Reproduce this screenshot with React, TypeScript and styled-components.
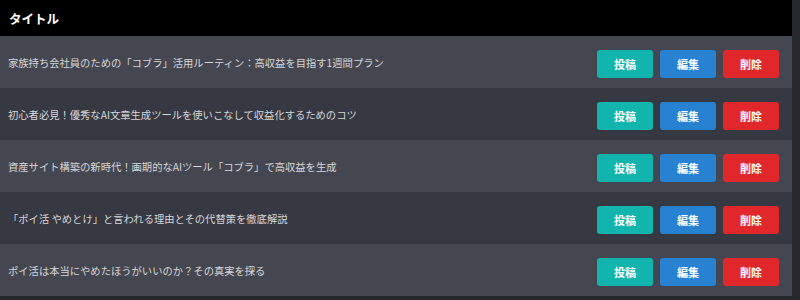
import styled, { createGlobalStyle } from "styled-components";

const GlobalStyle = createGlobalStyle`
  html, body {
    margin: 0;
    padding: 0;
    background: #27282c;
  }
  body {
    font-family: "Noto Sans CJK JP", "Noto Sans", sans-serif;
  }
`;

const Page = styled.div`
  width: 800px;
  height: 300px;
  display: flex;
  background: #27282c;
  overflow: hidden;
`;

const Table = styled.div`
  width: 792px;
  display: flex;
  flex-direction: column;
`;

const Header = styled.div`
  height: 36px;
  background: #000;
  color: #fff;
  font-size: 12.5px;
  font-weight: 700;
  display: flex;
  align-items: center;
  padding-left: 9px;
`;

const Row = styled.div<{ $alt: boolean }>`
  height: 52px;
  background: ${(p) => (p.$alt ? "#373942" : "#454750")};
  display: flex;
  align-items: center;
  justify-content: space-between;
  padding: 0 13px 0 8px;
  box-sizing: border-box;
`;

const Title = styled.span`
  color: #d6d6d8;
  font-size: 10.3px;
`;

const Actions = styled.div`
  display: flex;
  gap: 7px;
  margin-top: 4px;
`;

const Button = styled.button<{ $color: string }>`
  width: 56px;
  height: 28px;
  border: none;
  border-radius: 3px;
  background: ${(p) => p.$color};
  color: #fff;
  font-family: inherit;
  font-size: 11px;
  font-weight: 700;
  padding: 0;
  cursor: pointer;
`;

const titles = [
  "家族持ち会社員のための「コブラ」活用ルーティン：高収益を目指す1週間プラン",
  "初心者必見！優秀なAI文章生成ツールを使いこなして収益化するためのコツ",
  "資産サイト構築の新時代！画期的なAIツール「コブラ」で高収益を生成",
  "「ポイ活 やめとけ」と言われる理由とその代替策を徹底解説",
  "ポイ活は本当にやめたほうがいいのか？その真実を探る",
];

export default function App() {
  return (
    <>
      <GlobalStyle />
      <Page>
        <Table>
          <Header>タイトル</Header>
          {titles.map((t, i) => (
            <Row key={i} $alt={i % 2 === 1}>
              <Title>{t}</Title>
              <Actions>
                <Button $color="#12b5ae">投稿</Button>
                <Button $color="#2782d2">編集</Button>
                <Button $color="#e0282b">削除</Button>
              </Actions>
            </Row>
          ))}
        </Table>
      </Page>
    </>
  );
}
